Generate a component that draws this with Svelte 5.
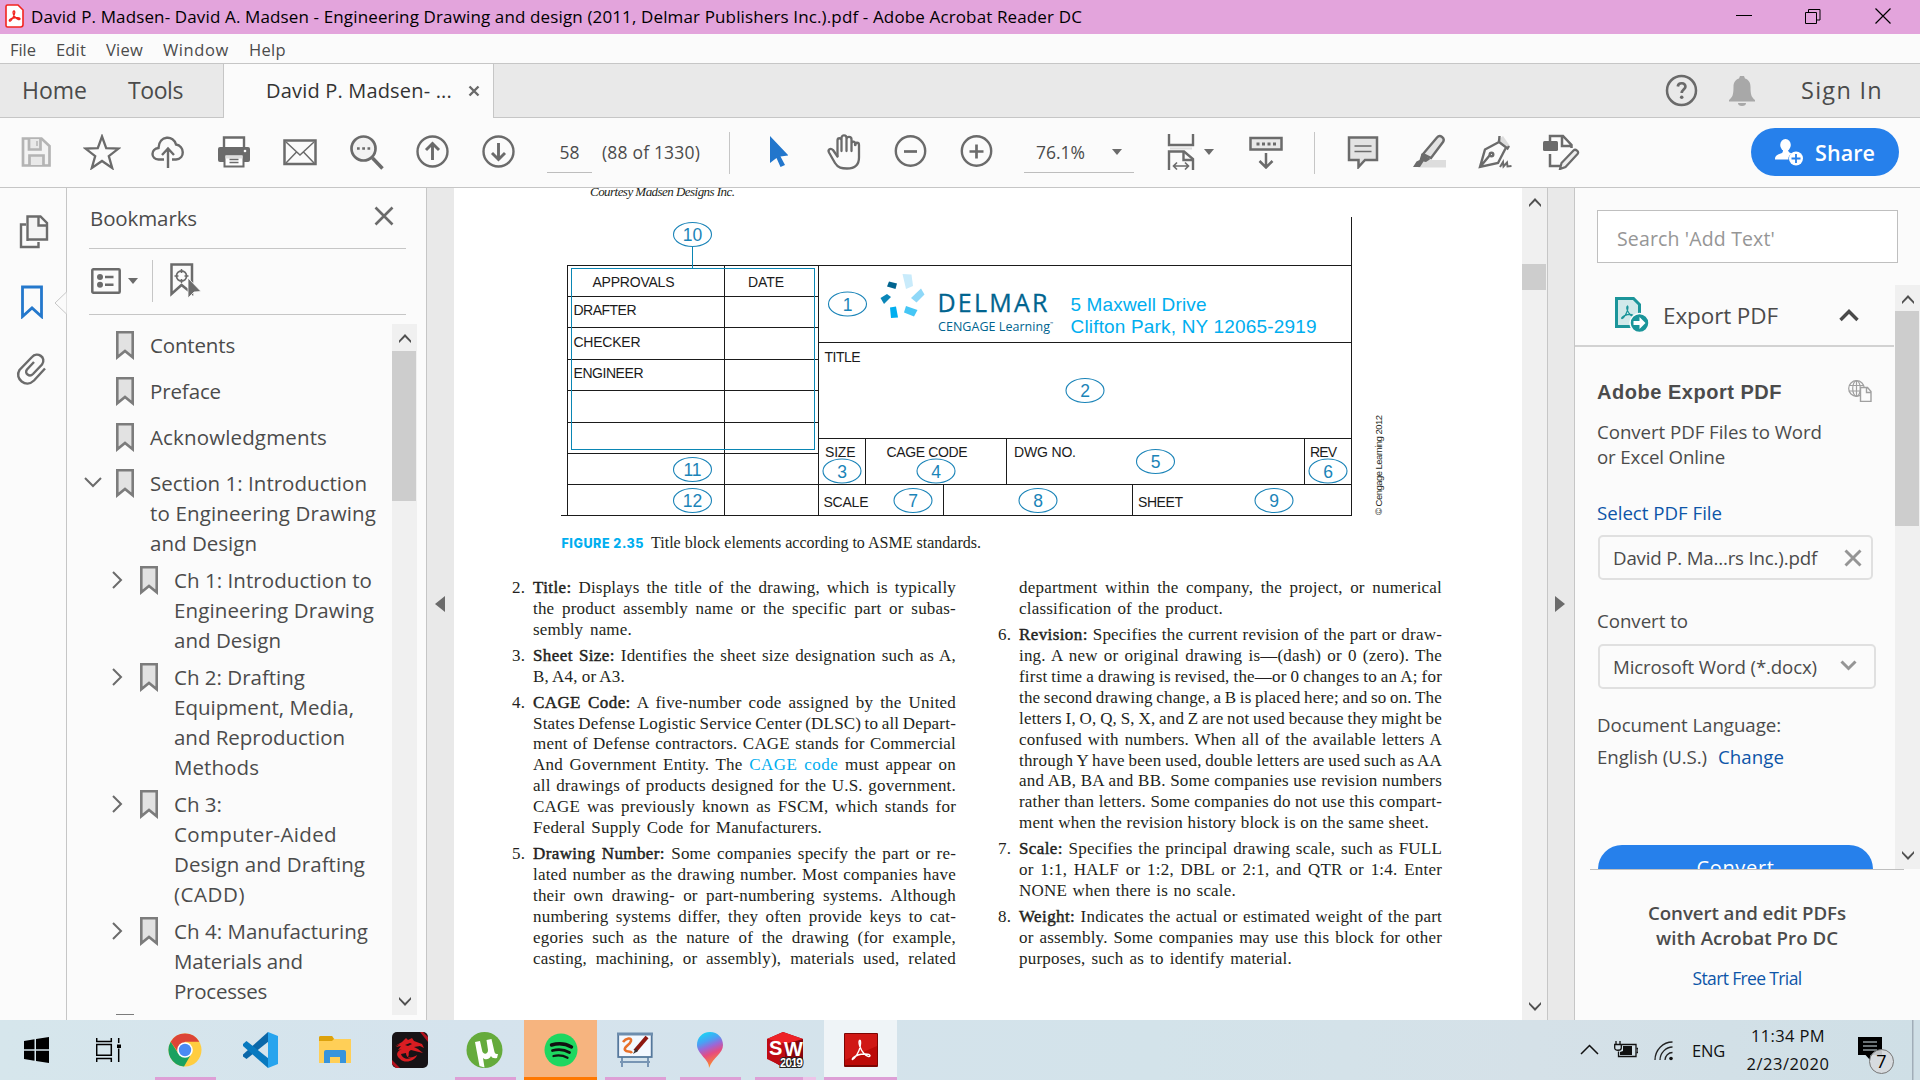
<script>
  // Tracks a run of text so that it fills a given width.
  function fit(node, width) {
    const count = node.textContent.length;
    if (!count) return;
    const natural = node.getBoundingClientRect().width;
    node.style.letterSpacing = `${(width - natural) / count}px`;
  }

  // Sets one line of book text to the column measure by its word gaps.
  function measure(node, width) {
    if (!width) return;
    const natural = node.getBoundingClientRect().width;
    const gaps = node.textContent.trim().split(' ').length - 1;
    node.style.wordSpacing = `${(width - natural) / gaps}px`;
  }

  const menus = [['File', 26], ['Edit', 30], ['View', 37], ['Window', 66], ['Help', 37]];

  const bookmarks = [
    { lines: [['Contents', 85]] },
    { lines: [['Preface', 71]] },
    { lines: [['Acknowledgments', 177]] },
    { open: true, lines: [['Section 1: Introduction', 217], ['to Engineering Drawing', 226], ['and Design', 107]] },
    { child: true, lines: [['Ch 1: Introduction to', 198], ['Engineering Drawing', 200], ['and Design', 107]] },
    { child: true, lines: [['Ch 2: Drafting', 131], ['Equipment, Media,', 180], ['and Reproduction', 171], ['Methods', 85]] },
    { child: true, lines: [['Ch 3:', 48], ['Computer-Aided', 163], ['Design and Drafting', 191], ['(CADD)', 71]] },
    { child: true, lines: [['Ch 4: Manufacturing', 194], ['Materials and', 129], ['Processes', 93]] },
    { lines: [] }
  ];

  const W = 423;
  const leftItems = [
    { n: '2.', label: 'Title:', lines: [['Displays the title of the drawing, which is typically', W], ['the product assembly name or the specific part or subas-', W], ['sembly name.', 99]] },
    { n: '3.', label: 'Sheet Size:', lines: [['Identifies the sheet size designation such as A,', W], ['B, A4, or A3.', 92]] },
    { n: '4.', label: 'CAGE Code:', lines: [['A five-number code assigned by the United', W], ['States Defense Logistic Service Center (DLSC) to all Depart-', W], ['ment of Defense contractors. CAGE stands for Commercial', W], ['And Government Entity. The |CAGE code| must appear on', W], ['all drawings of products designed for the U.S. government.', W], ['CAGE was previously known as FSCM, which stands for', W], ['Federal Supply Code for Manufacturers.', 289]] },
    { n: '5.', label: 'Drawing Number:', lines: [['Some companies specify the part or re-', W], ['lated number as the drawing number. Most companies have', W], ['their own drawing- or part-numbering systems. Although', W], ['numbering systems differ, they often provide keys to cat-', W], ['egories such as the nature of the drawing (for example,', W], ['casting, machining, or assembly), materials used, related', W]] }
  ];
  const rightItems = [
    { n: '', label: '', lines: [['department within the company, the project, or numerical', W], ['classification of the product.', 204]] },
    { n: '6.', label: 'Revision:', lines: [['Specifies the current revision of the part or draw-', W], ['ing. A new or original drawing is—(dash) or 0 (zero). The', W], ['first time a drawing is revised, the—or 0 changes to an A; for', W], ['the second drawing change, a B is placed here; and so on. The', W], ['letters I, O, Q, S, X, and Z are not used because they might be', W], ['confused with numbers. When all of the available letters A', W], ['through Y have been used, double letters are used such as AA', W], ['and AB, BA and BB. Some companies use revision numbers', W], ['rather than letters. Some companies do not use this compart-', W], ['ment when the revision history block is on the same sheet.', 410]] },
    { n: '7.', label: 'Scale:', lines: [['Specifies the principal drawing scale, such as FULL', W], ['or 1:1, HALF or 1:2, DBL or 2:1, and QTR or 1:4. Enter', W], ['NONE when there is no scale.', 217]] },
    { n: '8.', label: 'Weight:', lines: [['Indicates the actual or estimated weight of the part', W], ['or assembly. Some companies may use this block for other', W], ['purposes, such as to identify material.', 273]] }
  ];

  // Title block: field captions as [text, x, baseline, length].
  const fields = [
    ['APPROVALS', 592.5, 287, 82], ['DATE', 748, 287, 36], ['DRAFTER', 573.5, 315, 63], ['CHECKER', 573.5, 347, 67],
    ['ENGINEER', 573.5, 378, 70], ['TITLE', 824.5, 362, 36], ['SIZE', 825, 457, 30.5], ['CAGE CODE', 886.5, 457, 81],
    ['DWG NO.', 1014, 457, 62], ['REV', 1310, 457, 27], ['SCALE', 823.5, 507, 45], ['SHEET', 1138, 507, 45]
  ];
  const balloons = [
    [1, 847.5, 304], [2, 1085, 390.5], [3, 842, 471], [4, 936, 471], [5, 1155.5, 461.5], [6, 1328, 471],
    [7, 913, 500.5], [8, 1038, 500.5], [9, 1274, 500.5], [10, 692.5, 234.5], [11, 692.5, 469.5], [12, 692.5, 500.5]
  ];
</script>

{#snippet bookItem(item)}
  <div class="book-item">
    <span class="num">{item.n}</span>
    <div>
      {#each item.lines as [text, width], i}
        <div class="book-line">
          <span use:measure={width}>{#if i === 0 && item.label}<b>{item.label}</b>{' '}{/if}{#each text.split('|') as part, k}{#if k === 1}<em>{part}</em>{:else}{part}{/if}{/each}</span>
        </div>
      {/each}
    </div>
  </div>
{/snippet}

{#snippet arrowUp()}
  <svg class="arrow" width="12" height="10" viewBox="0 0 12 10"><path d="M0 7.5 6 1l6 6.500v2.500L6 4 0 10z" fill="#505050" /></svg>
{/snippet}
{#snippet arrowDown()}
  <svg class="arrow" width="12" height="10" viewBox="0 0 12 10"><path d="M0 2.500 6 9l6-6.500V0L6 6 0 0z" fill="#505050" /></svg>
{/snippet}

<div class="screen">
  <header class="titlebar">
    <svg width="19" height="24" viewBox="0 0 19 24"><path d="M2.500 1h10.500l5 5v14.500a2.500 2.500 0 0 1-2.500 2.500h-13A1.500 1.500 0 0 1 1 21.500v-19A1.500 1.500 0 0 1 2.500 1z" fill="#fff" stroke="#f2241f" stroke-width="1.600" /><path d="M9 7c-1.500 0-1 3 .5 5.500 1.500 2 5 4 5.500 2.500s-4-1.500-6.500-1-5 2-4 3 3-2.500 4-4.500S10.500 7 9 7z" fill="none" stroke="#f2241f" stroke-width="1.300" /></svg>
    <span class="t" use:fit={1051}>David P. Madsen- David A. Madsen - Engineering Drawing and design (2011, Delmar Publishers Inc.).pdf - Adobe Acrobat Reader DC</span>
    <div class="wincontrols">
      <svg width="16" height="16" viewBox="0 0 16 16"><path d="M0 7.500h16" stroke="#000" /></svg>
      <svg width="16" height="16" viewBox="0 0 16 16" fill="none" stroke="#000"><path d="M.5 4.500h11v11H.5zM3.500 4.500v-3h11.500v10.500h-3" /></svg>
      <svg width="16" height="16" viewBox="0 0 16 16"><path d="m.5.5 15 15m0-15-15 15" stroke="#000" stroke-width="1.200" /></svg>
    </div>
  </header>

  <nav class="menubar">
    {#each menus as [name, width]}<span class="t" use:fit={width}>{name}</span>{/each}
  </nav>

  <div class="tabs">
    <div class="apps"><span class="t" use:fit={65}>Home</span><span class="t" use:fit={55}>Tools</span></div>
    <div class="tab">
      <span class="t" use:fit={186}>David P. Madsen- ...</span>
      <svg width="12" height="12" viewBox="0 0 12 12"><path d="m1.500 1.500 9 9m0-9-9 9" stroke="#6a6a6a" stroke-width="2.400" /></svg>
    </div>
    <div class="account">
      <svg width="33" height="33" viewBox="0 0 33 33"><circle cx="16.500" cy="16.500" r="14.500" fill="none" stroke="#6a6a6a" stroke-width="2.500" /><path d="M12.800 12.500c.5-4.500 8-4.200 7.600.3-.3 2.700-3.700 2.900-3.700 6.200" fill="none" stroke="#6a6a6a" stroke-width="2.700" /><circle cx="16.700" cy="23.300" r="1.800" fill="#6a6a6a" /></svg>
      <svg width="26" height="30" viewBox="0 0 26 30"><path d="M11 0h4l1 2.500c4 1.500 5.500 4 5.500 8.500 0 8 1 10 4.500 13v1.500H0V24c3.500-3 4.500-5 4.500-13C4.500 6.500 6 4 10 2.500z" fill="#a8a8a8" /><path d="M9 27h8a4 3 0 0 1-8 0z" fill="#a8a8a8" /></svg>
      <span class="t" use:fit={82}>Sign In</span>
    </div>
  </div>

  <div class="toolbar">
    <div class="slots">
      <span><svg width="32" height="32" viewBox="0 0 32 32" fill="none" stroke="#b4b4b4" stroke-width="2.700"><path d="M3 2.500h18.500l8 7.500v19.500H3z" fill="#f3f3f3" /><path d="M9 3v10.500h11.500V3M9.500 29v-9.500h14V29" fill="#e9e9e9" /><path d="M17 5v5" stroke-width="1.500" /></svg></span>
      <span><svg width="38" height="36" viewBox="0 0 38 36"><path d="m19 2.500 4.200 11.700 12.300.4-9.700 7.500 3.400 11.900L19 27l-10.200 7 3.400-11.900-9.700-7.500 12.300-.4z" fill="none" stroke="#6b6b6b" stroke-width="2.300" /></svg></span>
      <span><svg width="36" height="34" viewBox="0 0 36 34" fill="none" stroke="#6b6b6b" stroke-width="2.400"><path d="M14 24.500H8.500C.5 24 .5 14 8.500 13 9 0 24 0 26 9.500c8.500 1.500 9.500 14 0 15h-4" /><path d="M18 33V14M12 20l6-6.500 6 6.500" /></svg></span>
      <span><svg width="34" height="32" viewBox="0 0 34 32"><path d="M7 11V1.500h20V11" fill="#fff" stroke="#6b6b6b" stroke-width="2.400" /><rect x="1" y="11" width="32" height="15" rx="2" fill="#6b6b6b" /><circle cx="28" cy="15" r="1.300" fill="#fff" /><path d="M7.500 18.500h19v12h-19z" fill="#fff" stroke="#6b6b6b" stroke-width="2" /><path d="M8.500 19.500h17v3h-17z" fill="#ddd" /><path d="M12.500 23.500h9m-9 3h9" stroke="#6b6b6b" stroke-width="1.300" /></svg></span>
      <span><svg width="34" height="28" viewBox="0 0 34 28" fill="none" stroke="#6b6b6b"><path d="M1.500 2.500h31v23.500h-31z" stroke-width="2.500" /><path d="m3 4 14 13L31 4M3 25l10.500-11M31 25 20.500 14" stroke-width="1.500" /></svg></span>
      <span><svg width="36" height="36" viewBox="0 0 36 36" fill="none" stroke="#6b6b6b"><circle cx="15.500" cy="14.500" r="12" fill="#f2f2f2" stroke-width="2.700" /><path d="m24.500 24 10 10.500" stroke-width="3.500" /><path d="M9 14.500h2.700m2.500 0H17m2.500 0h2.700" stroke-width="2.700" /></svg></span>
      <span><svg width="33" height="33" viewBox="0 0 33 33" fill="none" stroke="#6b6b6b"><circle cx="16.500" cy="16.500" r="15" stroke-width="2.400" /><path d="M16.500 25V9M10 15l6.500-6.500L23 15" stroke-width="2.900" /></svg></span>
      <span><svg width="33" height="33" viewBox="0 0 33 33" fill="none" stroke="#6b6b6b"><circle cx="16.500" cy="16.500" r="15" stroke-width="2.400" /><path d="M16.500 8v16M10 18l6.500 6.500L23 18" stroke-width="2.900" /></svg></span>
    </div>
    <div class="field page"><span class="t" use:fit={20}>58</span></div>
    <span class="t of" use:fit={98}>(88 of 1330)</span>
    <i class="rule"></i>
    <div class="slots">
      <span><svg width="20" height="32" viewBox="0 0 20 32"><path d="M2 0 20.500 19.500l-8 1 4.500 8.500-4.500 2-4-9L2 27z" fill="#2276cc" /></svg></span>
      <span><svg width="36" height="36" viewBox="0 0 36 36" fill="none" stroke="#6b6b6b" stroke-width="2.300" stroke-linecap="round" stroke-linejoin="round"><path d="M11.500 22.500 7 16c-2.500-2.500-5.500-.5-4 2.500l6 10.500c3 5 7 5.500 12 5.500 8 0 12-4 12-11V11c0-3-4-3-4 0" /><path d="M11.500 22V6.500c0-3 4-3 4 0V17M15.500 6V4c0-3.500 5-3.500 5 0v13M20.500 5.500c0-3.500 5-3.500 5 0V17M25.500 10c0-3.500 4-3 4 1" /></svg></span>
      <span><svg width="33" height="33" viewBox="0 0 33 33" fill="none" stroke="#6b6b6b"><circle cx="16.500" cy="16" r="14.700" stroke-width="2.400" /><path d="M10 16.500h13" stroke-width="2.700" /></svg></span>
      <span><svg width="33" height="33" viewBox="0 0 33 33" fill="none" stroke="#6b6b6b"><circle cx="16.500" cy="16" r="14.700" stroke-width="2.400" /><path d="M9.500 16.500h14m-7-7v14" stroke-width="2.700" /></svg></span>
    </div>
    <div class="field zoom"><span class="t" use:fit={49}>76.1%</span><i class="caret"></i></div>
    <div class="fitpage">
      <svg width="28" height="36" viewBox="0 0 28 36" fill="none" stroke="#6b6b6b" stroke-width="2.400"><path d="M2 0v11h24V0M2 36V17.500h15l9 7.500v11" /><path d="M16.500 17.500V26H26" /><path d="M3 14.500h22" stroke="#ddd" stroke-width="2" /><path d="M7 32h14M10 28.500 6.500 32l3.500 3.500m8-7 3.500 3.500-3.500 3.500" stroke-width="1.600" /></svg>
      <i class="caret"></i>
    </div>
    <div class="scrollmode">
      <svg width="34" height="33" viewBox="0 0 34 33" fill="none" stroke="#6b6b6b" stroke-width="2.500"><rect x="1.500" y="2" width="31" height="11.500" fill="#e8e8e8" /><path d="M7.500 8h3m2.500 0h3m2.500 0h3m2.500 0h3" stroke-width="2.800" /><path d="M17 17v14M10.500 25l6.500 6.500 6.500-6.500" /></svg>
    </div>
    <i class="rule"></i>
    <div class="slots">
      <span><svg width="32" height="34" viewBox="0 0 32 34"><path d="M2 2.500h28v22.500H18L11.500 32v-7H2z" fill="#e3e3e3" stroke="#6b6b6b" stroke-width="2.500" /><path d="M7.500 11h17m-17 5.500h17" stroke="#6b6b6b" stroke-width="1.500" /></svg></span>
      <span><svg width="36" height="35" viewBox="0 0 36 35"><path d="m12 27-5 6.500h28V26H13z" fill="#ddd" /><path d="M26 3.500c3-3.500 8.500.5 6 4.500L20 24l-8-4z" fill="#e3e3e3" stroke="#6b6b6b" stroke-width="2.400" /><path d="m10.500 19.500 9 5.500-4.500 3-2.500-.5-3.500 5.500H2l3.500-5.500 3-1.500z" fill="#6b6b6b" /></svg></span>
      <span><svg width="36" height="36" viewBox="0 0 36 36" fill="none" stroke="#6b6b6b" stroke-width="2.400"><path d="m20 7 6-5 7 10-4 3z" fill="#ddd" stroke="none" /><path d="M22.500 2 22 8l8.500 6.500L32 12M22 8 8 15.500 3 33l18-4 7.500-14.500M3 33l10-12" /><circle cx="14.500" cy="20.500" r="1.800" /><path d="m23 33 3-5 .5 4.500 3.500-4 .5 4 4-.5" stroke-width="2" /></svg></span>
      <span><svg width="38" height="36" viewBox="0 0 38 36" fill="none" stroke="#6b6b6b" stroke-width="2.500"><path d="M8 7V2h13l8.500 9v3M20 2v10h9M8 20v12h10" /><rect x="1" y="7" width="15" height="10" rx="1.500" fill="#6b6b6b" stroke="none" /><path d="M31.500 16.500c2-2 6 1 4 3.500L23.500 33l-5.500 2 1.500-6z" fill="#eee" stroke-width="2.200" /></svg></span>
    </div>
    <div class="share">
      <svg width="29" height="27" viewBox="0 0 29 27"><ellipse cx="10.500" cy="6" rx="5.300" ry="6" fill="#fff" /><path d="M8 9h5c0 4 1 4.500 4 5.500-3 1.500-4 4-3.500 6H0c0-5 4-5 7-6.500 1-1 1-2 1-5z" fill="#fff" /><circle cx="21" cy="19.500" r="7" fill="#fff" /><path d="M16.500 19.500h9M21 15v9" stroke="#2680eb" stroke-width="1.800" /></svg>
      <span class="t" use:fit={60}>Share</span>
    </div>
  </div>

  <main>
    <aside class="rail">
      <svg width="30" height="34" viewBox="0 0 30 34" fill="none" stroke="#6b6b6b" stroke-width="2.400"><path d="M7 9.500H2V32h17.500v-5" /><path d="M8.500 26V1.500h13L28 8v16.500H8.500zM19.500 2v8.500H28" fill="#f4f4f4" /></svg>
      <svg width="22" height="34" viewBox="0 0 22 34"><path d="M1.500 2h19v29.500L11 23 1.500 31.500z" fill="none" stroke="#2478cc" stroke-width="2.800" /></svg>
      <svg width="31" height="32" viewBox="0 0 31 32"><path d="m29 15.500-11 12c-8 8-20-2-14.500-10.500L16 4c5-5.500 15 0 10 7.500l-9 9.500c-3.500 3.500-9-.5-6-4.500l7-7.500" fill="none" stroke="#6b6b6b" stroke-width="2.400" /></svg>
      <svg class="notch" width="13" height="22" viewBox="0 0 13 22"><path d="M12.500 0 1 11l11.500 11" fill="#fbfbfb" stroke="#c6c6c6" /></svg>
    </aside>

    <section class="bookmarks">
      <div class="phead">
        <span class="t" use:fit={107}>Bookmarks</span>
        <svg width="20" height="20" viewBox="0 0 20 20"><path d="m1.500 1.500 17 17m0-17-17 17" stroke="#6b6b6b" stroke-width="2.600" /></svg>
      </div>
      <div class="ptools">
        <svg width="30" height="26" viewBox="0 0 30 26" fill="none" stroke="#6b6b6b"><rect x="1.300" y="1.300" width="27.400" height="23.400" rx="1" stroke-width="2.500" /><circle cx="9" cy="9" r="3" fill="#6b6b6b" stroke="none" /><circle cx="9" cy="16.800" r="3" fill="#6b6b6b" stroke="none" /><path d="M14 9h8.500M14 16.800h8.500" stroke-width="2.400" /></svg>
        <i class="caret"></i>
        <i class="rule"></i>
        <svg width="31" height="36" viewBox="0 0 31 36" fill="none" stroke="#6b6b6b" stroke-width="2.500"><path d="M1.500 1.500h20.500v29L11.500 22 1.500 31z" /><circle cx="11.500" cy="13" r="5" stroke-width="1.800" /><path d="M11.500 6v4m0 6v4M4.500 13h4m6 0h4" stroke-width="1.500" /><path d="m18 15 13 13.500-7 .5-6 6z" fill="#6b6b6b" stroke="#fbfbfb" stroke-width=".8" /></svg>
      </div>
      <div class="treewrap">
        <div class="tree">
          {#each bookmarks as b}
            <div class="node" class:child={b.child} class:multi={b.lines.length > 1}>
              <span class="twist">
                {#if b.open}<svg width="18" height="11" viewBox="0 0 18 11"><path d="m1 1 8 8 8-8" fill="none" stroke="#6b6b6b" stroke-width="2" /></svg>
                {:else if b.child}<svg width="11" height="18" viewBox="0 0 11 18"><path d="m1 1 8 8-8 8" fill="none" stroke="#6b6b6b" stroke-width="2" /></svg>{/if}
              </span>
              <svg class="bm" width="18" height="29" viewBox="0 0 18 29"><path d="M1.300 1.300h15.400v25L9 20l-7.700 6.300z" fill="#e2e2e2" stroke="#7c7c7c" stroke-width="2.600" /></svg>
              <div class="lines">{#each b.lines as [text, width]}<div><span class="t" use:fit={width}>{text}</span></div>{/each}</div>
            </div>
          {/each}
        </div>
        <div class="scroll">{@render arrowUp()}<i class="thumb"></i>{@render arrowDown()}</div>
      </div>
    </section>

    <div class="grip left"><svg width="10" height="16" viewBox="0 0 10 16"><path d="M10 0v16L0 8z" fill="#6b6b6b" /></svg></div>

    <article class="paper">
      <svg class="figure" width="1068" height="370" viewBox="454 188 1068 370">
        <text x="590" y="195.500" textLength="145" class="courtesy">Courtesy Madsen Designs Inc.</text>
        <g fill="none" stroke="#1b1b1b" shape-rendering="crispEdges">
          <path d="M567.500 515V265.500h784M1351.500 217v298.500H561M724.500 265v250M818.500 265v250" />
          <path d="M567 296.500h251M567 327.500h251M567 359.500h251M567 390.500h251M567 422.500h251M567 453.500h251M567 484.500h784" />
          <path d="M818 342.500h533M818 438.500h533M865.500 438v46M1006.500 438v46M1304.500 438v46M943.500 484v31M1132.500 484v31" />
          <path d="M571.500 268.500h243v181h-243zM692.500 246v22" stroke="#0a86b4" />
        </g>
        {#each fields as [text, x, y, len]}<text {x} {y} textLength={len} class="cap">{text}</text>{/each}
        {#each balloons as [n, x, y]}
          <ellipse cx={x} cy={y} rx="19" ry="12" fill="none" stroke="#1b84b8" stroke-width="1.100" />
          <text {x} y={y + 6.5} text-anchor="middle" class="balloon">{n}</text>
        {/each}
        <path d="m902.500 274 9 .5 1.500 11.500-7 3z" fill="#c9ebfb" />
        <path d="m911 298 10-9.500 3.500 6-8 8z" fill="#8fd8f8" />
        <path d="m906 306 11.500 4-3.500 6.500-10-4z" fill="#45c6f5" />
        <path d="m890 307.500 6-1 2 11-7 .5z" fill="#00aeef" />
        <path d="m880.500 298 6.500-4 4 3-7 7z" fill="#0a86b8" />
        <path d="m889 281.500 8 2-1.500 5.500-8.500-2.500z" fill="#00648f" />
        <text x="937.500" y="312" textLength="110" class="delmar">DELMAR</text>
        <text x="938" y="330.500" textLength="112" class="cengage">CENGAGE Learning</text>
        <text x="1050" y="325" class="tm">™</text>
        <text x="1070.500" y="311" textLength="136" class="addr">5 Maxwell Drive</text>
        <text x="1070.500" y="333" textLength="246" class="addr">Clifton Park, NY 12065-2919</text>
        <text transform="translate(1382 515) rotate(-90)" textLength="100" class="copy">© Cengage Learning 2012</text>
        <text x="561.500" y="548" textLength="82" class="fignum">FIGURE 2.35</text>
        <text x="651" y="548" textLength="330" class="figcap">Title block elements according to ASME standards.</text>
      </svg>
      <div class="columns">
        <div>{#each leftItems as item}{@render bookItem(item)}{/each}</div>
        <div>{#each rightItems as item}{@render bookItem(item)}{/each}</div>
      </div>
    </article>
    <div class="scroll doc">{@render arrowUp()}<i class="thumb"></i>{@render arrowDown()}</div>
    <div class="grip right"><svg width="10" height="16" viewBox="0 0 10 16"><path d="M0 0v16l10-8z" fill="#6b6b6b" /></svg></div>

    <aside class="tools">
      <div class="search"><span class="t" use:fit={158}>Search 'Add Text'</span></div>
      <div class="toolwrap">
        <div class="toolbody">
          <div class="exphead">
            <svg width="34" height="36" viewBox="0 0 34 36"><path d="M1.500 1.500h17l6 6v22h-23z" fill="#d1e9ea" stroke="#1b959a" stroke-width="3" /><path d="M12.500 9c-1.500 1 0 5 2 8s5 2.500 3 1-8 0-10 2 0 2.500 2-.5 4.500-9 3-10.500z" fill="none" stroke="#1b959a" stroke-width="1.200" /><circle cx="24.500" cy="26" r="9.500" fill="#1b959a" stroke="#fbfbfb" stroke-width="1.500" /><path d="M18.500 24h6v-4l6 6-6 6v-4h-6z" fill="#fff" /></svg>
            <span class="t" use:fit={115}>Export PDF</span>
            <svg width="20" height="13" viewBox="0 0 20 13"><path d="m1.500 11 8.500-8.500L18.500 11" fill="none" stroke="#4a4a4a" stroke-width="3.400" /></svg>
          </div>
          <div class="form">
            <div class="row adobe">
              <span class="t" use:fit={185}>Adobe Export PDF</span>
              <svg width="24" height="22" viewBox="0 0 24 22" fill="none" stroke="#a0a0a0" stroke-width="1.200"><circle cx="8.500" cy="8.500" r="7.800" /><ellipse cx="8.500" cy="8.500" rx="3.800" ry="7.800" /><path d="M1 5.500h15M.8 11h15M8.500 1v15" /><path d="M12.500 7.500h7l3.500 4V21.500H12.500zM18.500 8v4.500H23" fill="#fbfbfb" stroke-width="1.400" /></svg>
            </div>
            <p class="desc"><span class="t" use:fit={225}>Convert PDF Files to Word</span><br /><span class="t" use:fit={128}>or Excel Online</span></p>
            <p class="select"><a href="#file" class="t" use:fit={125}>Select PDF File</a></p>
            <div class="box file"><span class="t" use:fit={204}>David P. Ma...rs Inc.).pdf</span><svg width="18" height="18" viewBox="0 0 18 18"><path d="m1.500 1.500 15 15m0-15-15 15" stroke="#959595" stroke-width="2.900" /></svg></div>
            <p class="to"><span class="t" use:fit={91}>Convert to</span></p>
            <div class="box format"><span class="t" use:fit={204}>Microsoft Word (*.docx)</span><svg width="17" height="11" viewBox="0 0 17 11"><path d="m1.500 1.500 7 7 7-7" fill="none" stroke="#959595" stroke-width="3" /></svg></div>
            <p class="lang"><span class="t" use:fit={184}>Document Language:</span></p>
            <p class="english"><span class="t" use:fit={110}>English (U.S.)</span><a href="#lang" class="t" use:fit={66}>Change</a></p>
            <div class="convert"><span class="t" use:fit={78}>Convert</span></div>
          </div>
        </div>
        <div class="scroll side">{@render arrowUp()}<i class="thumb"></i>{@render arrowDown()}</div>
      </div>
      <div class="promo">
        <b class="t" use:fit={198}>Convert and edit PDFs</b>
        <b class="t" use:fit={182}>with Acrobat Pro DC</b>
        <a href="#trial" class="t" use:fit={109}>Start Free Trial</a>
      </div>
    </aside>
  </main>

  <footer class="taskbar">
    <div class="task"><svg width="25" height="26" viewBox="0 0 25 26"><path d="m0 4 10.500-1.700v10H0zM12 2l13-2v12.300H12zM0 13.700h10.500v10L0 22zM12 13.700h13V26l-13-2z" fill="#000" /></svg></div>
    <div class="task view"><svg width="26" height="24" viewBox="0 0 26 24" fill="none" stroke="#000" stroke-width="1.500"><path d="M.7 0v3.500h14.600V0M.7 6.500h14.600v10.800H.7zM.7 24v-3.500h14.600V24M22.700 0v5m0 5.500V24" /><path d="M21 6.500h4v3.500h-4z" fill="#000" stroke="none" /></svg></div>
    <div class="task run"><svg width="34" height="34" viewBox="0 0 34 34"><circle cx="17" cy="17" r="16.500" fill="#ffcd40" /><path d="M2.700 8.700A16.500 16.500 0 0 0 16 33.500l7.500-13L17 17l-7 3z" fill="#1aa160" /><path d="M2.700 8.700A16.500 16.500 0 0 1 31.300 8.700H17l-6.500 11z" fill="#dc4437" /><circle cx="17" cy="17" r="7.800" fill="#fff" /><circle cx="17" cy="17" r="6.200" fill="#4a8af4" /></svg></div>
    <div class="task"><svg width="36" height="36" viewBox="0 0 36 36"><path d="m26 0 .5 9.500L4.500 27 1 24.500v-2z" fill="#0b67a8" /><path d="m1 12 3.500-3 22 17.500L26 36 1 14z" fill="#0879bf" /><path d="m26 0 10 4v28l-10 4z" fill="#27a4ee" /></svg></div>
    <div class="task"><svg width="32" height="28" viewBox="0 0 32 28"><path d="M0 1.500A1.500 1.500 0 0 1 1.500 0H13l2.500 3H32v24H0z" fill="#ffcf57" /><path d="M0 1.500A1.500 1.500 0 0 1 1.500 0H13l2 3-2 2H0z" fill="#dda20c" /><path d="M5 27V16a2 2 0 0 1 2-2h18a2 2 0 0 1 2 2v11h-6v-6H11v6z" fill="#3794dc" /></svg></div>
    <div class="task"><svg width="36" height="36" viewBox="0 0 36 36"><rect width="36" height="36" rx="5" fill="#171316" /><path d="m3 14 7-4 4-4 2 2 4-2 2 3 8 3 2 4-4-2-6 1 4 2 5 4-4-1-8-2c-4 2-1 4-3 7 3 1 6 0 9-2-2 6-12 9-17 4-5-4-3-8 2-10l-4 1 3-4-5 1 4-3z" fill="#d91d22" /><path d="m13 13 5-2 2 1-4 2zM9 22c1 4 6 6 10 4-3 0-5-2-5-5z" fill="#171316" /><path d="M28 0h3l5 5v5zM0 28l8 8H4l-4-4z" fill="#b3121e" /></svg></div>
    <div class="task run"><svg width="37" height="36" viewBox="0 0 37 36"><circle cx="18.500" cy="18" r="18" fill="#65ab3c" /><path d="m9 10 5-1 2 9c.6 5 6 5 6 0L20.500 8l5-1 3 13c.5 2 2 2 3.500 2l-1 4c-3 .5-5 0-6-2-2 4-6 4-8 2l1.500 9.500-5-1.500z" fill="#fff" /></svg></div>
    <div class="task spotify"><svg width="34" height="34" viewBox="0 0 34 34"><circle cx="17" cy="17" r="16.500" fill="#1ed760" /><g fill="none" stroke="#111" stroke-linecap="round"><path d="M7.500 12c7-2 14-1.500 20 2" stroke-width="3.400" /><path d="M8.500 17.500c6-1.700 12-1 17 2" stroke-width="2.800" /><path d="M9.500 23c5-1.200 9.500-.7 14 1.700" stroke-width="2.300" /></g></svg></div>
    <div class="task run"><svg width="36" height="36" viewBox="0 0 36 36"><path d="M5 25v10m26-10v10M3 30h30" stroke="#7895b4" stroke-width="2" /><rect x="1.200" y="2" width="33.500" height="23" fill="#f3f8ff" stroke="#55789c" stroke-width="1.800" /><path d="M0 2h36" stroke="#6e8eae" stroke-width="3" /><path d="M6 10c3-4 9-5 8-1s-8 6-6 9 5 0 7 3" fill="none" stroke="#e8702a" stroke-width="2.600" /><path d="M30 5 18 19" stroke="#8e1710" stroke-width="4" /><path d="m19 16-3 6 5-3z" fill="#333" /></svg></div>
    <div class="task run">
      <svg width="28" height="36" viewBox="0 0 28 36"><defs><linearGradient id="drop" x1=".3" y1="0" x2=".6" y2="1"><stop offset="0" stop-color="#18d5f4" /><stop offset=".25" stop-color="#4aa0f4" /><stop offset=".42" stop-color="#9a68d8" /><stop offset=".62" stop-color="#e64b80" /><stop offset="1" stop-color="#ff9a1a" /></linearGradient></defs><path d="M14 0c8 0 13 6 13 13 0 9-10 12-14 23 1-8-12-14-12-23C1 6 6 0 14 0z" fill="url(#drop)" /></svg>
    </div>
    <div class="task run stacked"><svg width="38" height="36" viewBox="0 0 38 36"><path d="m1 7 16-7 20 7v23l-19 6L1 26z" fill="#86050d" /><path d="M1 7 17 0l20 7-18 5z" fill="#ee2227" /><path d="m1 7 18 5v23.500L1 27z" fill="#bf0b14" /><text x="3" y="23" textLength="13" class="sw">S</text><text x="18" y="23.500" textLength="17" class="sw">W</text><text x="14" y="35" textLength="23" class="yr">2019</text></svg></div>
    <div class="task active"><svg width="34" height="34" viewBox="0 0 34 34"><rect width="34" height="34" rx="1" fill="#7e0503" /><path d="M1 1h32v31H1z" fill="#bc0a08" /><path d="M1 1h32v12L1 27z" fill="#d01815" /><path d="M15.500 7.500c-1.500 2 1 9 4 12.500s7 4.500 6.500 2.500-8-2-12-.5-6.500 4-5.500 4.500 4.500-4.500 6.500-9 2-11.500.5-10z" fill="none" stroke="#fff" stroke-width="1.400" /></svg></div>
    <div class="tray">
      <svg class="up" width="19" height="11" viewBox="0 0 19 11"><path d="m1 10 8.500-8.500L18 10" fill="none" stroke="#111" stroke-width="1.500" /></svg>
      <svg class="bat" width="24" height="17" viewBox="0 0 24 17" fill="none" stroke="#111" stroke-width="1.300"><path d="M8 3.500h14v12H4.500v-5" /><path d="M22.500 7.500h1.500v4h-1.500M2 0v3m4-3v3M.7 3.500h6.600V7c0 3-6.600 3-6.600 0z" /><path d="M9 5h9v9H6v-3l3-1z" fill="#111" stroke="none" /></svg>
      <svg class="wifi" width="20" height="20" viewBox="0 0 20 20" fill="none" stroke="#222" stroke-width="1.300"><path d="M1 19C1 9 9 1 18.500 1M6 19C6 12 12 6 18.500 6M11 19c0-4 3.500-7.500 7.500-7.500" /><circle cx="17" cy="17.500" r="1.800" fill="#111" stroke="none" /></svg>
      <span class="t lang-id" use:fit={33}>ENG</span>
      <div class="clock"><span class="t" use:fit={74}>11:34 PM</span><span class="t" use:fit={83}>2/23/2020</span></div>
      <div class="note">
        <svg width="24" height="24" viewBox="0 0 24 24"><path d="M0 0h24v18H12.500v5.500L7.500 18H0z" fill="#000" /><path d="M5 5h14M5 9h14M5 13h14" stroke="#d4e2e8" stroke-width="1.200" /></svg>
        <span class="badge">7</span>
      </div>
      <i class="desk"></i>
    </div>
  </footer>
</div>

<style>
  :global(body) { margin: 0; overflow: hidden; }
  .screen { width: 1920px; height: 1080px; display: flex; flex-direction: column; background: #fbfbfb; color: #4b4b4b; font-family: 'Open Sans', 'Noto Sans', sans-serif; overflow: hidden; }
  svg { display: block; flex: none; }
  i, .t { flex: none; }
  .t { display: inline-block; white-space: nowrap; }
  a { color: #0d55a8; text-decoration: none; }
  p { margin: 0; }

  .titlebar { height: 34px; flex: none; display: flex; align-items: center; gap: 7px; padding-left: 5px; background: #e3a4dc; color: #000; font-size: 17px; }
  .titlebar svg { margin-top: -2px; }
  .titlebar .t { line-height: 34px; }
  .wincontrols { margin-left: auto; display: flex; gap: 53px; padding-right: 29px; }
  .wincontrols svg:nth-child(-n + 2) { margin-right: 1px; margin-left: -1px; }

  .menubar { height: 29px; flex: none; display: flex; gap: 20px; padding-left: 10px; border-bottom: 1px solid #c6c6c6; font-size: 16.500px; line-height: 32px; }

  .tabs { height: 54px; flex: none; display: flex; }
  .apps { width: 223px; box-sizing: border-box; padding-left: 22px; display: flex; gap: 41px; font-size: 23px; line-height: 53px; background: #e9e9e9; border-bottom: 1px solid #c6c6c6; }
  .tab { width: 227px; border: solid #c6c6c6; border-width: 0 1px; display: flex; align-items: center; gap: 16px; padding-left: 42px; font-size: 20px; color: #333; line-height: 54px; }
  .account { flex: 1; display: flex; align-items: center; justify-content: flex-end; gap: 30px; padding-right: 37px; background: #e9e9e9; border-bottom: 1px solid #c6c6c6; font-size: 23.500px; line-height: 55px; }
  .account svg:nth-child(2) { margin-left: 1px; }
  .account .t { margin-left: 16px; }

  .toolbar { height: 69px; flex: none; display: flex; align-items: center; padding-left: 3px; border-bottom: 1px solid #c6c6c6; font-size: 17.500px; }
  .slots { display: flex; }
  .slots span { width: 66px; height: 67px; padding-bottom: 2px; display: flex; align-items: center; justify-content: center; }
  .field { height: 41px; border-bottom: 1px solid #bdbdbd; display: flex; align-items: center; box-sizing: border-box; }
  .page { width: 45px; margin-left: 16px; justify-content: center; }
  .of { margin: -1px 0 0 10px; }
  .rule { width: 1px; height: 42px; background: #c6c6c6; }
  .toolbar > .rule { margin: 0 15px 0 29px; }
  .zoom { width: 110px; margin-left: 15px; padding-left: 12px; gap: 27px; }
  .caret { border: solid transparent; border-width: 6px 5.500px 0; border-top-color: #6b6b6b; }
  .fitpage { margin-left: 33px; width: 47px; display: flex; align-items: center; gap: 9px; padding-bottom: 1px; }
  .scrollmode { margin-left: 35px; padding-bottom: 1px; }
  .scrollmode + .rule { margin: 0 15px 0 31px; }
  .share { margin: -1px 21px 0 auto; width: 148px; height: 48px; box-sizing: border-box; padding-left: 24px; border-radius: 24px; background: #2680eb; color: #fff; display: flex; align-items: center; gap: 11px; font-size: 21.500px; font-weight: 600; }

  main { flex: 1; min-height: 0; display: flex; }
  .rail { width: 67px; flex: none; box-sizing: border-box; border-right: 1px solid #c6c6c6; position: relative; display: flex; flex-direction: column; align-items: center; padding-top: 27px; gap: 36px; }
  .notch { position: absolute; right: -1px; top: 104px; }
  .rail svg:nth-child(1) { margin-left: 2px; }
  .rail svg:nth-child(2) { margin-right: 2px; }
  .rail svg:nth-child(3) { margin: -2px 4px 0 0; }

  .bookmarks { width: 359px; flex: none; border-right: 1px solid #c6c6c6; display: flex; flex-direction: column; font-size: 20.500px; }
  .phead { height: 60px; margin: 0 20px 0 22px; padding: 0 12px 0 1px; border-bottom: 1px solid #c6c6c6; display: flex; align-items: center; justify-content: space-between; line-height: 60px; }
  .phead svg { margin-top: -4px; }
  .ptools { height: 63px; margin: 0 20px 0 22px; padding: 0 0 2px 2px; border-bottom: 1px solid #c6c6c6; display: flex; align-items: center; }
  .ptools .caret { margin: 0 14px 0 7px; border-width: 6px 5px 0; }
  .ptools .rule { margin-right: 17px; }
  .treewrap { margin-top: 9px; height: 691px; display: flex; }
  .tree { width: 325px; overflow: hidden; }
  .node { height: 46px; display: flex; align-items: flex-start; padding-left: 17px; }
  .node.multi { height: auto; padding-bottom: 7px; }
  .node.child { padding-left: 45px; }
  .twist { width: 32px; padding-top: 15px; flex: none; }
  .child .twist { width: 28px; padding-top: 12px; }
  .bm { margin-top: 7px; }
  .lines { padding: 6px 0 0 16px; margin-bottom: -6px; line-height: 30px; }

  .scroll { width: 25px; flex: none; background: #f0f0f0; display: flex; flex-direction: column; align-items: center; padding: 9px 0 8px; box-sizing: border-box; }
  .thumb { width: 24px; height: 150px; margin: 8px 1px auto 0; background: #cdcdcd; }
  .grip { width: 27px; flex: none; background: #e9e9e9; display: flex; align-items: center; justify-content: center; }
  .grip svg { margin: -1px 2px 0 0; }
  .grip.right { border: solid #c6c6c6; border-width: 0 1px; width: 26px; }
  .doc .thumb { height: 26px; margin-top: 57px; }

  .paper { width: 1068px; flex: none; background: #fff; overflow: hidden; color: #231f20; }
  .courtesy { font: italic 13px 'Liberation Serif', serif; fill: #231f20; }
  .cap { font: 14px 'Liberation Sans', sans-serif; fill: #1b1b1b; }
  .balloon { font: 17.500px 'Liberation Sans', sans-serif; fill: #1b84b8; }
  .delmar { font: 500 25px 'Open Sans', sans-serif; fill: #00648f; stroke: #00648f; stroke-width: 0.3px; }
  .cengage { font: 500 12.500px 'Open Sans', sans-serif; fill: #00648f; }
  .tm { font: 4px 'Noto Sans', sans-serif; fill: #00648f; }
  .addr { font: 19px 'Liberation Sans', sans-serif; fill: #00aeef; }
  .copy { font: 9.500px 'Liberation Sans', sans-serif; fill: #231f20; }
  .fignum { font: 800 12.500px Inter, sans-serif; fill: #00aeef; }
  .figcap { font: 16px 'Liberation Serif', serif; fill: #231f20; }
  .columns { display: grid; grid-template-columns: 444px 444px; column-gap: 42px; padding: 20px 0 0 57px; font: 17px/20.960px 'Liberation Serif', serif; letter-spacing: 0.2px; }
  .book-item { display: grid; grid-template-columns: 22px 1fr; margin-bottom: 4.900px; }
  .num { padding-left: 1px; }
  .book-line { height: 20.960px; }
  .book-line span { display: inline-block; white-space: nowrap; }
  .book-line b { font-weight: 400; -webkit-text-stroke: 0.45px #231f20; letter-spacing: 0.4px; }
  .book-line em { font-style: normal; color: #00aeef; letter-spacing: 0.5px; }

  .tools { flex: 1; display: flex; flex-direction: column; font-size: 18.700px; }
  .search { width: 301px; height: 53px; box-sizing: border-box; margin: 22px 0 0 22px; border: 1px solid #bfbfbf; background: #fff; color: #969696; padding-left: 19px; font-size: 19.500px; line-height: 56px; }
  .toolwrap { height: 584px; margin-top: 22px; display: flex; }
  .toolbody { width: 319px; margin-right: 1px; overflow: hidden; }
  .exphead { height: 60px; border-bottom: 2px solid #d2d2d2; display: flex; align-items: center; padding-left: 40px; gap: 14px; font-size: 22.500px; line-height: 61px; }
  .exphead svg:last-child { margin-left: 47px; }
  .form { padding: 33px 0 0 23px; line-height: 25px; }
  .row { display: flex; }
  .adobe { font: bold 20px/25px 'Liberation Sans', sans-serif; justify-content: space-between; width: 275px; margin-left: -1px; }
  .desc { margin: 14px 0 0 -1px; }
  .select { margin: 31px 0 0 -1px; }
  .box { height: 45px; width: 275px; box-sizing: border-box; border: 2px solid #e0e0e0; border-radius: 5px; display: flex; align-items: center; justify-content: space-between; padding: 0 9px 0 13px; line-height: 43px; }
  .file { margin-top: 10px; }
  .format { margin-top: 11px; width: 278px; padding-right: 17px; }
  .format svg { margin-top: -2px; }
  .to { margin: 28px 0 0 -1px; }
  .lang { margin: 23px 0 0 -1px; }
  .english { margin: 7px 0 0 -1px; }
  .english a { margin-left: 11px; }
  .convert { margin-top: 76px; width: 275px; height: 48px; border-radius: 24px; background: #2680eb; color: #fff; text-align: center; font-size: 20px; line-height: 45px; }
  .side .thumb { height: 215px; margin-top: 7px; }
  .promo { margin: 0 16px 0 15px; border-top: 1px solid #bfbfbf; padding-top: 30px; display: flex; flex-direction: column; align-items: center; line-height: 25px; }
  .promo b { font-weight: 600; }
  .promo a { margin-top: 16px; font-size: 17.500px; }

  .taskbar { height: 60px; flex: none; display: flex; background: linear-gradient(90deg, #d6e6ec, #d5e3ed 25%, #d3e3ea 60%, #d5e1e8 80%, #cfdfe6); color: #111; }
  .task { width: 75px; display: flex; align-items: center; justify-content: center; position: relative; }
  .task:first-child { width: 72px; }
  .view svg { margin-right: 2px; }
  .task.run::after { content: ''; position: absolute; bottom: 0; left: 8px; width: 61px; height: 3px; background: #de9fd6; }
  .task.stacked::after { background: linear-gradient(90deg, #de9fd6 48px, #edc3e8 48px); }
  .task.spotify, .task.active { box-sizing: border-box; width: 73px; margin: 0 0 0 2px; }
  .task.spotify { background: #f6b47f; border-bottom: 3px solid #ff7800; padding-top: 3px; }
  .task.active { background: #eff4f7; border-bottom: 3px solid #de9fd6; padding-top: 3px; }
  .sw { font: bold 20px 'Liberation Sans', sans-serif; fill: #fff; }
  .yr { font: bold 12px 'Liberation Sans', sans-serif; fill: #fff; stroke: #222; stroke-width: 2px; paint-order: stroke; }
  .tray { margin-left: auto; display: flex; align-items: center; font-size: 16.500px; }
  .up { margin-top: -1px; }
  .bat { margin: -1px 0 0 15px; }
  .wifi { margin: 1px 0 0 16px; }
  .lang-id { margin: 1px 0 0 18px; }
  .clock { width: 84px; margin-left: 21px; display: flex; flex-direction: column; align-items: center; line-height: 28.500px; }
  .note { margin-left: 28px; position: relative; width: 54px; height: 24px; }
  .note svg { margin-top: -1px; }
  .badge { position: absolute; left: 11px; top: 11px; width: 23px; height: 23px; border: 1px solid #777; border-radius: 50%; background: rgba(215, 218, 222, 0.9); text-align: center; line-height: 23px; color: #000; font-size: 18px; }
  .desk { width: 1px; height: 60px; background: #a0adb8; border-right: 1px solid #b9c6ce; margin-right: 6px; }
</style>
